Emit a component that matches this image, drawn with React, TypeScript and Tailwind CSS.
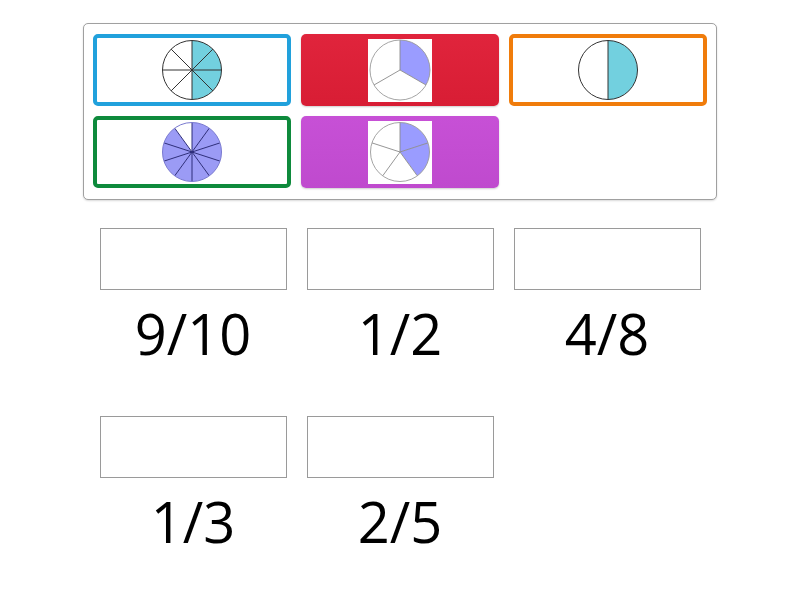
import React from "react";

type PieProps = {
  n: number;
  filled: number[];
  fill: string;
  line: string;
  outline: string;
  r?: number;
  size?: number;
  strokeW?: number;
};

function Pie({ n, filled, fill, line, outline, r = 29.5, size = 62, strokeW = 1 }: PieProps) {
  const c = size / 2;
  const pt = (k: number) => {
    const a = (k / n) * Math.PI * 2 - Math.PI / 2;
    return [c + r * Math.cos(a), c + r * Math.sin(a)];
  };
  const slices = [];
  for (let i = 0; i < n; i++) {
    const [x1, y1] = pt(i);
    const [x2, y2] = pt(i + 1);
    const large = 1 / n > 0.5 ? 1 : 0;
    slices.push(
      <path
        key={"s" + i}
        d={`M${c} ${c} L${x1} ${y1} A${r} ${r} 0 ${large} 1 ${x2} ${y2} Z`}
        fill={filled.includes(i) ? fill : "#ffffff"}
        stroke="none"
      />
    );
  }
  const lines = [];
  for (let i = 0; i < n; i++) {
    const [x, y] = pt(i);
    lines.push(<line key={"l" + i} x1={c} y1={c} x2={x} y2={y} stroke={line} strokeWidth={strokeW} />);
  }
  return (
    <svg width={size} height={size} viewBox={`0 0 ${size} ${size}`}>
      {slices}
      {lines}
      <circle cx={c} cy={c} r={r} fill="none" stroke={outline} strokeWidth={strokeW} />
    </svg>
  );
}

function Tile({ children, cls }: { children: React.ReactNode; cls: string }) {
  return <div className={`h-[72px] rounded-[5px] flex items-center justify-center ${cls}`}>{children}</div>;
}

function Slot({ label }: { label: string }) {
  return (
    <div className="flex flex-col">
      <div className="h-[62px] border border-[#9a9a9a] bg-white" />
      <div className="h-[126px] flex justify-center">
        <div className="mt-[7px] text-[56px] leading-[72px] text-black" style={{ fontFamily: '"Open Sans", sans-serif' }}>
          {label}
        </div>
      </div>
    </div>
  );
}

export default function App() {
  return (
    <div className="w-[800px] h-[600px] bg-white relative overflow-hidden" style={{ fontFamily: '"Open Sans", sans-serif' }}>
      <div className="pt-[23px] flex justify-center">
        <div className="w-[634px] h-[177px] border border-[#a0a0a0] rounded-[5px] bg-white shadow-[0_1px_2px_rgba(0,0,0,0.15)] px-[9px] py-[10px]">
          <div className="grid grid-cols-[198px_198px_198px] gap-x-[10px] gap-y-[10px]">
            <Tile cls="border-[4px] border-[#21a1dc] bg-white">
              <Pie n={8} filled={[0, 1, 2, 3]} fill="#72d0df" line="#333333" outline="#333333" />
            </Tile>
            <Tile cls="bg-gradient-to-b from-[#e0243c] to-[#d81d34] shadow-[0_1px_2px_rgba(0,0,0,0.2)]">
              <div className="w-[64px] h-[63px] bg-white flex items-center justify-center">
                <Pie n={3} filled={[0]} fill="#9a9cff" line="#8a8a8a" outline="#9a9a9a" r={30} size={62} strokeW={0.9} />
              </div>
            </Tile>
            <Tile cls="border-[4px] border-[#f07c0b] bg-white">
              <Pie n={2} filled={[0]} fill="#72d0df" line="#333333" outline="#333333" />
            </Tile>
            <Tile cls="border-[4px] border-[#0e8a3c] bg-white">
              <Pie n={10} filled={[0, 1, 2, 3, 4, 5, 6, 7, 8]} fill="#9b9bf5" line="#2c2c7a" outline="#7a7ad0" />
            </Tile>
            <Tile cls="bg-gradient-to-b from-[#c750d6] to-[#bf4ace] shadow-[0_1px_2px_rgba(0,0,0,0.2)]">
              <div className="w-[64px] h-[63px] bg-white flex items-center justify-center">
                <Pie n={5} filled={[0, 1]} fill="#9a9cff" line="#8a8a8a" outline="#9a9a9a" r={29.5} size={62} strokeW={0.9} />
              </div>
            </Tile>
          </div>
        </div>
      </div>
      <div className="mt-[28px] flex justify-center">
        <div className="grid grid-cols-[187px_187px_187px] gap-x-[20px]">
          <Slot label="9/10" />
          <Slot label="1/2" />
          <Slot label="4/8" />
          <Slot label="1/3" />
          <Slot label="2/5" />
        </div>
      </div>
    </div>
  );
}
